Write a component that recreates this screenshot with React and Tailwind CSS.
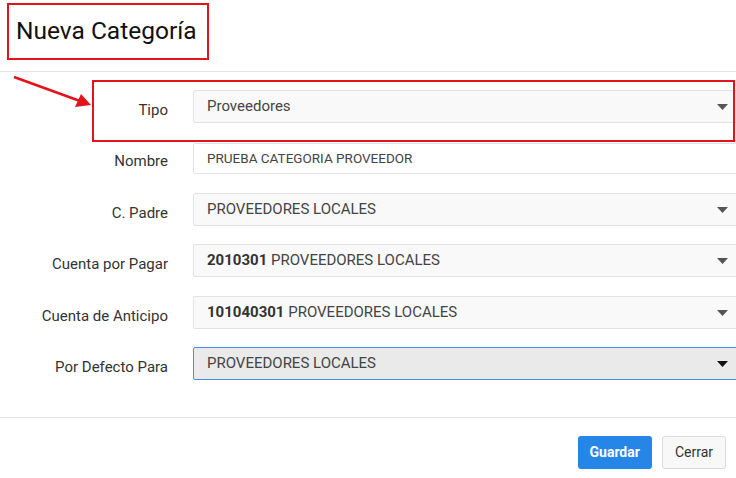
import React from "react";

const Caret = ({ dark }) => (
  <svg width="11" height="6" viewBox="0 0 11 6" className="shrink-0">
    <path d="M0 0 L11 0 L5.5 6 Z" fill={dark ? "#111" : "#555"} />
  </svg>
);

const Select = ({ children, active }) => (
  <div
    className={
      "flex-1 h-[33px] flex items-center justify-between pl-[13px] pr-[9px] -mr-[2px] rounded-[2px] border text-[15px] text-[#444] " +
      (active ? "bg-[#eaeaea] border-[#4a8fe0]" : "bg-[#f9f9f9] border-[#e2e2e2]")
    }
  >
    <span>{children}</span>
    <Caret dark={active} />
  </div>
);

const Row = ({ label, className = "", children }) => (
  <div className={"flex items-start " + className}>
    <div className="w-[168px] text-right pt-[12px] text-[15px] text-[#333] leading-[16px]">{label}</div>
    <div className="flex-1 flex ml-[25px]">{children}</div>
  </div>
);

export default function App() {
  return (
    <div
      className="relative w-[736px] h-[478px] bg-white overflow-hidden"
      style={{ fontFamily: "Roboto, 'Liberation Sans', sans-serif" }}
    >
      {/* header */}
      <div className="h-[72px] border-b border-[#e5e5e5] pt-[3px] pl-[7px]">
        <div className="inline-flex w-[202px] h-[57px] items-center pl-[7px] border-2 border-[#e3131b] text-[24.5px] text-[#111]">
          Nueva Categoría
        </div>
      </div>

      {/* form */}
      <div className="flex flex-col pt-[18px] pb-[37px] border-b border-[#e5e5e5]">
        <Row label="Tipo">
          <Select>Proveedores</Select>
        </Row>
        <div className="flex items-start mt-[20px]">
          <div className="w-[168px] text-right pt-[10px] text-[15px] text-[#333] leading-[16px]">Nombre</div>
          <div className="flex-1 ml-[25px] -mr-[2px] h-[31px] flex items-center pl-[13px] rounded-[2px] border border-[#e2e2e2] bg-white text-[13.5px] text-[#444]">
            PRUEBA CATEGORIA PROVEEDOR
          </div>
        </div>
        <Row label="C. Padre" className="mt-[19px]">
          <Select>PROVEEDORES LOCALES</Select>
        </Row>
        <Row label="Cuenta por Pagar" className="mt-[18px]">
          <Select>
            <b className="font-bold text-[#333]">2010301</b> PROVEEDORES LOCALES
          </Select>
        </Row>
        <Row label="Cuenta de Anticipo" className="mt-[19px]">
          <Select>
            <b className="font-bold text-[#333]">101040301</b> PROVEEDORES LOCALES
          </Select>
        </Row>
        <Row label="Por Defecto Para" className="mt-[18px]">
          <Select active>PROVEEDORES LOCALES</Select>
        </Row>
      </div>

      {/* footer */}
      <div className="flex justify-end gap-[10px] pt-[18px] pr-[10px]">
        <button className="h-[33px] px-[12px] rounded-[3px] bg-[#2686e8] text-white font-bold text-[14px]">
          Guardar
        </button>
        <button className="h-[33px] px-[12px] rounded-[3px] bg-[#f8f8f8] border border-[#dcdcdc] text-[#333] text-[14px]">
          Cerrar
        </button>
      </div>

      {/* annotations */}
      <div className="absolute left-[92px] top-[80px] w-[643px] h-[62px] border-2 border-[#e3131b] pointer-events-none" />
      <svg className="absolute left-0 top-[70px]" width="100" height="40" viewBox="0 0 100 40">
        <line x1="14" y1="7" x2="80" y2="31" stroke="#e3131b" strokeWidth="2.5" />
        <path d="M91 35 L75 37 L81 24 Z" fill="#e3131b" />
      </svg>
    </div>
  );
}
